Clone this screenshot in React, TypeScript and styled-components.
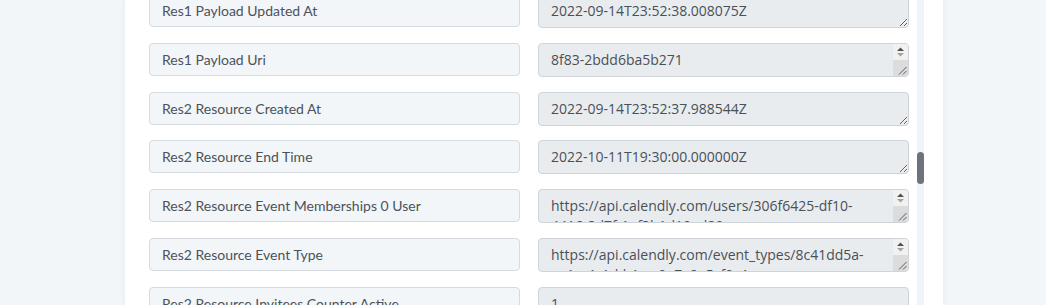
import React from 'react';
import styled, { createGlobalStyle } from 'styled-components';

const fields = [
    { label: 'Res1 Payload Updated At', value: '2022-09-14T23:52:38.008075Z' },
    { label: 'Res1 Payload Uri', value: '8f83-2bdd6ba5b271', scroll: true },
    { label: 'Res2 Resource Created At', value: '2022-09-14T23:52:37.988544Z' },
    { label: 'Res2 Resource End Time', value: '2022-10-11T19:30:00.000000Z' },
    {
        label: 'Res2 Resource Event Memberships 0 User',
        value: 'https://api.calendly.com/users/306f6425-df10-4416-8d7f-1ef3b1d19ad29',
        scroll: true,
    },
    {
        label: 'Res2 Resource Event Type',
        value: 'https://api.calendly.com/event_types/8c41dd5a-aa1e-4c1d-b1ce-9a7a2e5cf0e1',
        scroll: true,
    },
    { label: 'Res2 Resource Invitees Counter Active', value: '1' },
];

function TextScrollbar() {
    return (
        <Gutter>
            <GutterButtons>
                <svg width="15" height="16" viewBox="0 0 15 16">
                    <path d="M4 7 L7.5 3.5 L11 7 Z" fill="#505050" />
                    <path d="M4 9 L11 9 L7.5 12.5 Z" fill="#a3a3a3" />
                </svg>
            </GutterButtons>
            <GutterCorner>
                <svg width="15" height="15" viewBox="0 0 15 15">
                    <path d="M13.5 6 L6 13.5 M13.5 10 L10 13.5" stroke="#5c5c5c" strokeWidth="1" />
                </svg>
            </GutterCorner>
        </Gutter>
    );
}

export default function App() {
    return (
        <>
            <GlobalStyle />
            <Page>
                <Card>
                    <FieldList>
                        {
                            fields.map((field) => (
                                <FieldRow key={field.label}>
                                    <FieldLabel>{ field.label }</FieldLabel>
                                    <ValueBox>
                                        <FieldValue
                                            readOnly
                                            value={ field.value }
                                            $scroll={ !!field.scroll }
                                        />
                                        { field.scroll && <TextScrollbar /> }
                                    </ValueBox>
                                </FieldRow>
                            ))
                        }
                    </FieldList>
                    <ScrollTrack>
                        <ScrollThumb />
                    </ScrollTrack>
                </Card>
            </Page>
        </>
    );
}

const GlobalStyle = createGlobalStyle`
    html, body {
        margin: 0;
        padding: 0;
        background: #f3f6f9;
        overflow: hidden;
    }
`;

const Page = styled.div`
    display: flex;
    height: 305px;
    padding-left: 125px;
    overflow: hidden;
`;

const Card = styled.div`
    display: flex;
    width: 818px;
    height: 305px;
    background: #ffffff;
    box-shadow: 0 0 6px rgba(40, 60, 90, 0.08);
`;

const FieldList = styled.div`
    display: flex;
    flex-direction: column;
    gap: 14.8px;
    width: 760px;
    margin-top: -6px;
    padding-left: 24px;
`;

const FieldRow = styled.div`
    display: grid;
    grid-template-columns: 371px 371px;
    column-gap: 18px;
    align-items: start;
`;

const FieldLabel = styled.div`
    box-sizing: border-box;
    height: 33px;
    display: flex;
    align-items: center;
    padding: 0 12px;
    background: #f3f6f9;
    border: 1px solid #d5dae1;
    border-radius: 4px;
    font-family: Lato, 'Open Sans', sans-serif;
    font-size: 14px;
    color: #4c5259;
    white-space: nowrap;
    overflow: hidden;
`;

const ValueBox = styled.div`
    position: relative;
    width: 371px;
    height: 34px;
`;

const FieldValue = styled.textarea<{ $scroll: boolean }>`
    box-sizing: border-box;
    display: block;
    width: 371px;
    height: 34px;
    margin: 0;
    padding: 6px ${(props) => (props.$scroll ? '27px' : '12px')} 6px 12px;
    background: #e9ecef;
    border: 1px solid #ced4da;
    border-radius: 4px;
    font-family: 'Open Sans', 'Noto Sans', sans-serif;
    font-size: 14px;
    line-height: 20px;
    color: #495057;
    outline: none;
    overflow: hidden;
`;

const Gutter = styled.div`
    position: absolute;
    top: 1px;
    right: 1px;
    bottom: 1px;
    width: 15px;
    display: flex;
    flex-direction: column;
    border-radius: 0 3px 3px 0;
    overflow: hidden;
    pointer-events: none;
`;

const GutterButtons = styled.div`
    height: 16px;
    background: #f1f1f1;

    svg {
        display: block;
    }
`;

const GutterCorner = styled.div`
    flex: 1;
    display: flex;
    align-items: flex-end;
    background: #dcdcdc;

    svg {
        display: block;
    }
`;

const ScrollTrack = styled.div`
    width: 7px;
    height: 305px;
    margin-left: 8px;
    background: #eef4fc;
`;

const ScrollThumb = styled.div`
    width: 7px;
    height: 32px;
    margin-top: 152px;
    border-radius: 4px;
    background: #6c737c;
`;
